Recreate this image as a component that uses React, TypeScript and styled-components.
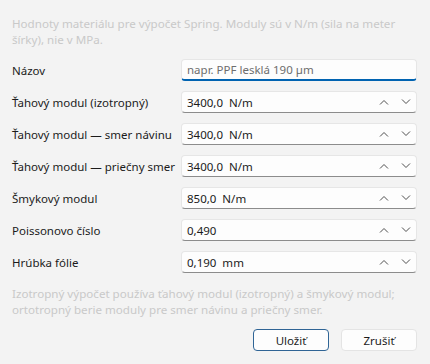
import { Fragment } from "react";
import styled, { createGlobalStyle } from "styled-components";

const GlobalStyle = createGlobalStyle`
  html, body {
    margin: 0;
    padding: 0;
    background: #f3f3f3;
  }
  body {
    font-family: "Noto Sans", "Open Sans", sans-serif;
    font-size: 11.5px;
    color: #1b1b1b;
  }
`;

const Dialog = styled.div`
  width: 430px;
  height: 364px;
  box-sizing: border-box;
  padding: 16px 13px 0 12px;
  display: flex;
  flex-direction: column;
`;

const Hint = styled.p<{ $gap?: number }>`
  margin: 0;
  margin-top: ${(p) => p.$gap ?? 0}px;
  color: #c9c9c9;
  font-size: 11.6px;
  line-height: 16px;
`;

const FieldGrid = styled.div`
  margin-top: 11px;
  display: grid;
  grid-template-columns: 169px 1fr;
  grid-auto-rows: 22px;
  row-gap: 10px;
  align-items: center;
`;

const Label = styled.label`
  font-size: 11.5px;
  color: #1b1b1b;
  white-space: nowrap;
`;

const Box = styled.div<{ $focused?: boolean }>`
  height: 22px;
  box-sizing: border-box;
  display: flex;
  align-items: center;
  background: #fdfdfd;
  border: 1px solid #e6e6e6;
  border-bottom: ${(p) => (p.$focused ? "2px solid #0063b1" : "1px solid #8c8c8c")};
  border-radius: 4px;
  padding: 0 2px 0 5px;
`;

const Value = styled.span<{ $placeholder?: boolean }>`
  flex: 1;
  color: ${(p) => (p.$placeholder ? "#6d6d6d" : "#1b1b1b")};
  white-space: pre;
`;

const SpinButtons = styled.div`
  display: flex;
  gap: 6px;
  align-items: center;
`;

const Spin = styled.span`
  width: 16px;
  display: flex;
  justify-content: center;
  color: #4f4f4f;
`;

const Actions = styled.div`
  margin-top: 11px;
  display: flex;
  justify-content: flex-end;
  gap: 12px;
`;

const Button = styled.button<{ $accent?: boolean }>`
  width: 76px;
  height: 22px;
  box-sizing: border-box;
  font-family: inherit;
  font-size: 11.5px;
  color: #1b1b1b;
  background: #fdfdfd;
  border: 1px solid ${(p) => (p.$accent ? "#2f6495" : "#e4e4e4")};
  border-radius: 4px;
  padding: 0;
`;

const Chevron = ({ up }: { up?: boolean }) => (
  <svg width="10" height="6" viewBox="0 0 10 6">
    <path
      d={up ? "M1 5.5 L5 1.5 L9 5.5" : "M1 0.5 L5 4.5 L9 0.5"}
      fill="none"
      stroke="currentColor"
      strokeWidth="1"
    />
  </svg>
);

const NumberBox = ({ value }: { value: string }) => (
  <Box>
    <Value>{value}</Value>
    <SpinButtons>
      <Spin>
        <Chevron up />
      </Spin>
      <Spin>
        <Chevron />
      </Spin>
    </SpinButtons>
  </Box>
);

const fields = [
  { label: "Ťahový modul (izotropný)", value: "3400,0  N/m" },
  { label: "Ťahový modul — smer návinu", value: "3400,0  N/m" },
  { label: "Ťahový modul — priečny smer", value: "3400,0  N/m" },
  { label: "Šmykový modul", value: "850,0  N/m" },
  { label: "Poissonovo číslo", value: "0,490" },
  { label: "Hrúbka fólie", value: "0,190  mm" },
];

export default function App() {
  return (
    <>
      <GlobalStyle />
      <Dialog>
        <Hint>
          Hodnoty materiálu pre výpočet Spring. Moduly sú v N/m (sila na meter
          šírky), nie v MPa.
        </Hint>
        <FieldGrid>
          <Label>Názov</Label>
          <Box $focused>
            <Value $placeholder>napr. PPF lesklá 190 µm</Value>
          </Box>
          {fields.map((f) => (
            <Fragment key={f.label}>
              <Label>{f.label}</Label>
              <NumberBox value={f.value} />
            </Fragment>
          ))}
        </FieldGrid>
        <Hint $gap={13}>
          Izotropný výpočet používa ťahový modul (izotropný) a šmykový modul;
          ortotropný berie moduly pre smer návinu a priečny smer.
        </Hint>
        <Actions>
          <Button $accent>Uložiť</Button>
          <Button>Zrušiť</Button>
        </Actions>
      </Dialog>
    </>
  );
}
